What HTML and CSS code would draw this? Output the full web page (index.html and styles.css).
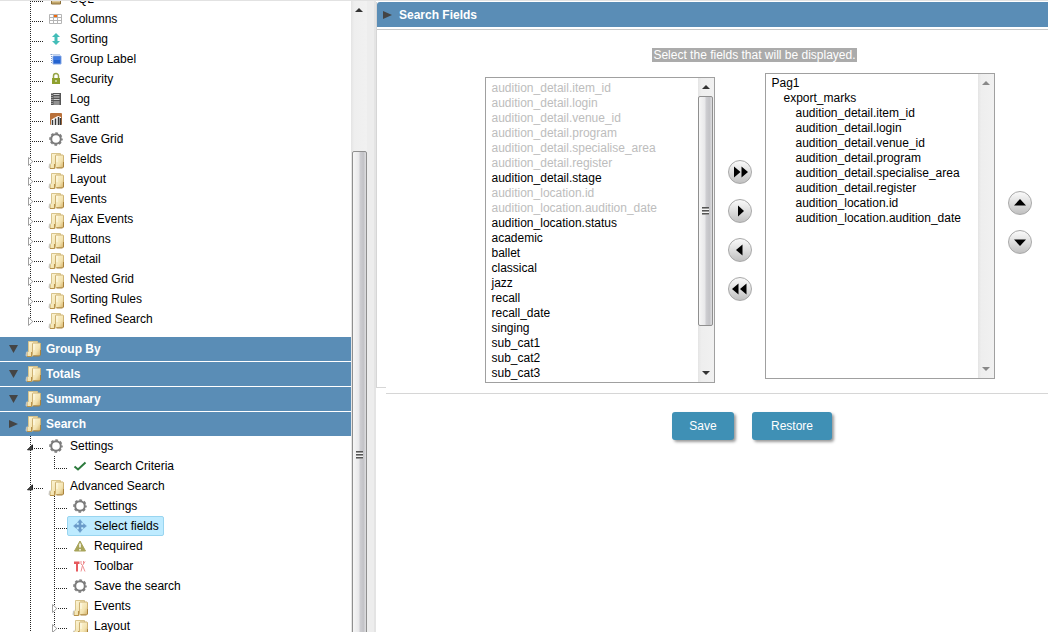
FILE: index.html
```html
<!DOCTYPE html>
<html lang="en">
<head>
<meta charset="utf-8">
<title>Search Fields</title>
<link rel="stylesheet" href="styles.css">
</head>
<body>
<svg class="defs" aria-hidden="true">
  <defs>
    <linearGradient id="gold" x1="0" y1="0" x2="1" y2="1">
      <stop offset="0" stop-color="#fdf6d8"/><stop offset=".6" stop-color="#f3e3b0"/><stop offset="1" stop-color="#d2b068"/>
    </linearGradient>
    <symbol id="folder" viewBox="0 0 16 20">
      <path d="M1 14.500l1.500-2v6H1.500l-1-1z" fill="#c9c6bd"/>
      <path d="M3.500 3.500h9v11l-6 4H2.500v-4l1-1z" fill="url(#gold)" stroke="#d8c48c"/>
      <path d="M2 18.500h4.500v-4.500" fill="none" stroke="#b8924a"/>
      <path d="M7.500 5.500l.500-.500h7l.500.500v11l-1 1H8.500l-1-1z" fill="url(#gold)" stroke="#ceb273"/>
      <path d="M8.500 18h6l1-1v-5" stroke="#a9823c" fill="none"/>
      <path d="M9 6v6" stroke="#fffbe8"/>
    </symbol>
    <symbol id="gear" viewBox="0 0 16 20">
      <circle cx="8" cy="10" r="4.800" fill="none" stroke="#7b7b7b" stroke-width="2"/>
      <circle cx="8" cy="10" r="6" fill="none" stroke="#7b7b7b" stroke-width="1.500" stroke-dasharray="2.700 2.012" stroke-dashoffset="1.350"/>
    </symbol>
    <symbol id="closed" viewBox="0 0 6 9"><path d="M.5.500v8L4.800 4.500z" fill="#fff" stroke="#a0a0a0"/></symbol>
    <symbol id="opened" viewBox="0 0 6 9"><path d="M5.500.800v5H.5z" fill="#444" stroke="#222"/></symbol>
    <symbol id="arrow-up" viewBox="0 0 8 4"><path d="M0 4L4 0l4 4z" fill="currentColor"/></symbol>
    <symbol id="arrow-down" viewBox="0 0 8 4"><path d="M0 0h8L4 4z" fill="currentColor"/></symbol>
  </defs>
</svg>

<div class="app">
  <nav class="sidebar" aria-label="Application">
    <div class="sidebar-content">
      <ul class="tree tree-main">
        <li><a href="#"><svg class="icon" viewBox="0 0 16 20"><path d="M3.500 7h9v8h-9z" fill="#c3a76d" stroke="#8d713b"/><path d="M4 12h8" stroke="#f5e9c6"/></svg>SQL</a></li>
        <li><a href="#"><svg class="icon" viewBox="0 0 16 20"><path d="M1.500 5.500h12v9h-12zM5.500 5.500v9M9.500 5.500v9M1.500 8.500h12M1.500 11.500h12" fill="#fff" stroke="#b5b5b5"/><path d="M6 6h3v2H6z" fill="#f26a0a"/></svg>Columns</a></li>
        <li><a href="#"><svg class="icon" viewBox="0 0 16 20"><path d="M8 4l4 4H9.500v4H12l-4 4-4-4h2.500V8H4z" fill="#43bdb8"/></svg>Sorting</a></li>
        <li><a href="#"><svg class="icon" viewBox="0 0 16 20"><path d="M2.500 5.500h10M3.500 5v10" stroke="#7d9ccc" stroke-dasharray="1 1"/><path d="M5 7h8v8H5z" fill="#2463cf" stroke="#85a9e8"/><path d="M6 8h6v3H6z" fill="#3f7be2"/></svg>Group Label</a></li>
        <li><a href="#"><svg class="icon" viewBox="0 0 16 20"><path d="M5.500 10V7a2.500 2.500 0 0 1 5 0v3" fill="none" stroke="#97a548" stroke-width="1.500"/><path d="M4 9h8v6H4z" fill="#8ea02f"/><path d="M7.500 11h1v2h-1z" fill="#fff"/></svg>Security</a></li>
        <li><a href="#"><svg class="icon" viewBox="0 0 16 20"><path d="M3 4h10v12H3z" fill="#555"/><path d="M5.500 5.500h6M5.500 8h6M5.500 10.500h6M5.500 13h6M5.500 15h6" stroke="#d0d0d0"/><path d="M4 4v12" stroke="#ddd" stroke-dasharray="1 1"/></svg>Log</a></li>
        <li><a href="#"><svg class="icon" viewBox="0 0 16 20"><rect x="2" y="4" width="12" height="12" rx="1" fill="#b9713a"/><path d="M3 16v-5l3-2 4-2 3 1v8z" fill="#fff"/><path d="M4.500 16v-5M7.500 16V9.500M10.500 16V8M12.500 16V9" stroke="#383838" stroke-width="1.500"/></svg>Gantt</a></li>
        <li><a href="#"><svg class="icon"><use href="#gear"/></svg>Save Grid</a></li>
        <li><svg class="twisty"><use href="#closed"/></svg><a href="#"><svg class="icon folder"><use href="#folder"/></svg>Fields</a></li>
        <li><svg class="twisty"><use href="#closed"/></svg><a href="#"><svg class="icon folder"><use href="#folder"/></svg>Layout</a></li>
        <li><svg class="twisty"><use href="#closed"/></svg><a href="#"><svg class="icon folder"><use href="#folder"/></svg>Events</a></li>
        <li><svg class="twisty"><use href="#closed"/></svg><a href="#"><svg class="icon folder"><use href="#folder"/></svg>Ajax Events</a></li>
        <li><svg class="twisty"><use href="#closed"/></svg><a href="#"><svg class="icon folder"><use href="#folder"/></svg>Buttons</a></li>
        <li><svg class="twisty"><use href="#closed"/></svg><a href="#"><svg class="icon folder"><use href="#folder"/></svg>Detail</a></li>
        <li><svg class="twisty"><use href="#closed"/></svg><a href="#"><svg class="icon folder"><use href="#folder"/></svg>Nested Grid</a></li>
        <li><svg class="twisty"><use href="#closed"/></svg><a href="#"><svg class="icon folder"><use href="#folder"/></svg>Sorting Rules</a></li>
        <li class="last"><svg class="twisty"><use href="#closed"/></svg><a href="#"><svg class="icon folder"><use href="#folder"/></svg>Refined Search</a></li>
      </ul>

      <div class="sections">
        <a class="section" href="#"><svg class="marker" viewBox="0 0 10 10"><path d="M0 1h9L4.500 9z"/></svg><svg class="icon"><use href="#folder"/></svg>Group By</a>
        <a class="section" href="#"><svg class="marker" viewBox="0 0 10 10"><path d="M0 1h9L4.500 9z"/></svg><svg class="icon"><use href="#folder"/></svg>Totals</a>
        <a class="section" href="#"><svg class="marker" viewBox="0 0 10 10"><path d="M0 1h9L4.500 9z"/></svg><svg class="icon"><use href="#folder"/></svg>Summary</a>
        <a class="section" href="#"><svg class="marker" viewBox="0 0 10 10"><path d="M0 1v8l9-4z"/></svg><svg class="icon"><use href="#folder"/></svg>Search</a>
      </div>

      <ul class="tree">
        <li><svg class="twisty open"><use href="#opened"/></svg><a href="#"><svg class="icon"><use href="#gear"/></svg>Settings</a>
          <ul>
            <li class="last"><a href="#"><svg class="icon" viewBox="0 0 16 20"><path d="M2.500 10.500l3.500 3 7.500-7" fill="none" stroke="#2c7a3c" stroke-width="2"/></svg>Search Criteria</a></li>
          </ul>
        </li>
        <li><svg class="twisty open"><use href="#opened"/></svg><a href="#"><svg class="icon folder"><use href="#folder"/></svg>Advanced Search</a>
          <ul>
            <li><a href="#"><svg class="icon"><use href="#gear"/></svg>Settings</a></li>
            <li><a class="selected" href="#"><svg class="icon" viewBox="0 0 16 20"><path d="M8 3.500l2.500 3H9v2.500h2.500V7.500l3 2.500-3 2.500V11H9v2.500h1.500l-2.500 3-2.500-3H7V11H4.500v1.500l-3-2.500 3-2.500V9H7V6.500H5.500z" fill="#6b9bc9" stroke="#6b9bc9" stroke-width=".5"/></svg>Select fields</a></li>
            <li><a href="#"><svg class="icon" viewBox="0 0 16 20"><path d="M8 5l5.500 10h-11z" fill="#a8a45a" stroke="#a8a45a" stroke-linejoin="round"/><path d="M8 7.500v4M8 13v1.500" stroke="#fff" stroke-width="1.500"/></svg>Required</a></li>
            <li><a href="#"><svg class="icon" viewBox="0 0 16 20"><path d="M2 5.500h5.500v2.500H2zM4 7.500h2v8H4z" fill="#e65a5e"/><path d="M9 5v3l1.500 1.500L13 5.500M10.500 9.500l2.500 6M10.500 9.500L9 15.500M11.500 5v3" fill="none" stroke="#ef8f92"/></svg>Toolbar</a></li>
            <li><a href="#"><svg class="icon"><use href="#gear"/></svg>Save the search</a></li>
            <li><svg class="twisty"><use href="#closed"/></svg><a href="#"><svg class="icon folder"><use href="#folder"/></svg>Events</a></li>
            <li><svg class="twisty"><use href="#closed"/></svg><a href="#"><svg class="icon folder"><use href="#folder"/></svg>Layout</a></li>
          </ul>
        </li>
      </ul>
    </div>
    <div class="scrollbar scrollbar-page" aria-hidden="true">
      <svg class="arrow"><use href="#arrow-up"/></svg>
      <div class="thumb"><span class="grip"></span></div>
    </div>
  </nav>
  <div class="splitter"></div>

  <main class="main">
    <section class="panel">
      <h1 class="panel-title"><svg class="marker" viewBox="0 0 10 10"><path d="M0 1v8l9-4z"/></svg>Search Fields</h1>
      <div class="panel-body">
        <p class="hint"><span>Select the fields that will be displayed.</span></p>
        <div class="picker">
          <div class="list list-source">
            <select multiple aria-label="Available fields">
              <option disabled>audition_detail.item_id</option>
              <option disabled>audition_detail.login</option>
              <option disabled>audition_detail.venue_id</option>
              <option disabled>audition_detail.program</option>
              <option disabled>audition_detail.specialise_area</option>
              <option disabled>audition_detail.register</option>
              <option>audition_detail.stage</option>
              <option disabled>audition_location.id</option>
              <option disabled>audition_location.audition_date</option>
              <option>audition_location.status</option>
              <option>academic</option>
              <option>ballet</option>
              <option>classical</option>
              <option>jazz</option>
              <option>recall</option>
              <option>recall_date</option>
              <option>singing</option>
              <option>sub_cat1</option>
              <option>sub_cat2</option>
              <option>sub_cat3</option>
            </select>
            <div class="scrollbar" aria-hidden="true">
              <svg class="arrow"><use href="#arrow-up"/></svg>
              <div class="thumb"><span class="grip"></span></div>
              <svg class="arrow"><use href="#arrow-down"/></svg>
            </div>
          </div>
          <div class="moves">
            <button type="button" aria-label="Add all"><svg viewBox="0 0 24 24"><path d="M6 6.500v11l6.500-5.500zM13.500 6.500v11L20 12z"/></svg></button>
            <button type="button" aria-label="Add"><svg viewBox="0 0 24 24"><path d="M10 6.500v11l6-5.500z"/></svg></button>
            <button type="button" aria-label="Remove"><svg viewBox="0 0 24 24"><path d="M14.500 6.500v11L8 12z"/></svg></button>
            <button type="button" aria-label="Remove all"><svg viewBox="0 0 24 24"><path d="M10.500 6.500v11L4 12zM18.500 6.500v11L12 12z"/></svg></button>
          </div>
          <div class="list">
            <select multiple aria-label="Selected fields">
              <option>Pag1</option>
              <option class="depth-1">export_marks</option>
              <option class="depth-2">audition_detail.item_id</option>
              <option class="depth-2">audition_detail.login</option>
              <option class="depth-2">audition_detail.venue_id</option>
              <option class="depth-2">audition_detail.program</option>
              <option class="depth-2">audition_detail.specialise_area</option>
              <option class="depth-2">audition_detail.register</option>
              <option class="depth-2">audition_location.id</option>
              <option class="depth-2">audition_location.audition_date</option>
            </select>
            <div class="scrollbar idle" aria-hidden="true">
              <svg class="arrow"><use href="#arrow-up"/></svg>
              <svg class="arrow"><use href="#arrow-down"/></svg>
            </div>
          </div>
          <div class="moves moves-order">
            <button type="button" aria-label="Move up"><svg viewBox="0 0 24 24"><path d="M6 14.500h12L12 8z"/></svg></button>
            <button type="button" aria-label="Move down"><svg viewBox="0 0 24 24"><path d="M6 9.500h12L12 16z"/></svg></button>
          </div>
        </div>
      </div>
    </section>
    <div class="actions">
      <button type="button">Save</button>
      <button type="button" class="wide">Restore</button>
    </div>
  </main>
</div>
</body>
</html>
```

FILE: styles.css
```css
* { box-sizing: border-box; }

body {
  margin: 0;
  background: #fff;
  color: #000;
  font: 12px/15px "Liberation Sans", Arial, sans-serif;
}

a { color: inherit; text-decoration: none; }
ul { margin: 0; padding: 0; list-style: none; }
svg { flex: none; display: block; }
button, select { font: inherit; color: inherit; }
.defs { position: absolute; width: 0; height: 0; }

.app {
  display: flex;
  height: 100vh;
  overflow: hidden;
  border-top: 1px solid #e2e2e2;
}

/* Sidebar */
.sidebar { display: flex; flex: 0 0 367px; min-height: 0; }
.sidebar-content { flex: 1; overflow: hidden; }
.tree { padding-left: 30px; }
.tree-main { margin-top: -12px; padding-bottom: 8px; }

.tree li {
  position: relative;
  padding-left: 13px;
  background: repeating-linear-gradient(#222 0 1px, transparent 1px 2px) 0 0 / 1px 100% no-repeat;
}
.tree li.last { background-size: 1px 13px; }
.tree li::before {
  content: "";
  position: absolute;
  left: 2px;
  top: 12px;
  width: 12px;
  height: 1px;
  background: repeating-linear-gradient(90deg, #222 0 1px, transparent 1px 2px);
}
.tree li > ul { margin-left: 11px; }
.tree a {
  display: inline-flex;
  align-items: center;
  gap: 6px;
  height: 20px;
  padding: 0 4px;
  border: 1px solid transparent;
  border-radius: 2px;
  vertical-align: top;
  white-space: nowrap;
}
.tree a.selected { background: #beebff; border-color: #99d5f0; }
.icon { width: 16px; height: 20px; }
.tree .folder { padding-top: 1px; height: 21px; }
.twisty { position: absolute; left: -2px; top: 8px; width: 6px; height: 9px; }
.twisty.open { left: -3px; }

.sections { display: flex; flex-direction: column; gap: 1px; }
.section, .panel-title {
  display: flex;
  align-items: center;
  background: #5a8db6;
  color: #fff;
  font-size: 12px;
  font-weight: bold;
}
.section { height: 24px; padding: 0 9px; }
.section .icon { margin: 0 5px 2px 6px; }
.marker { width: 10px; height: 10px; fill: #444; }

/* Scrollbars */
.scrollbar {
  display: flex;
  flex-direction: column;
  align-items: center;
  flex: 0 0 16px;
  background: linear-gradient(90deg, #e4e4e4, #eee 20%, #f1f1f1);
  color: #333;
}
.scrollbar .arrow { width: 8px; height: 4px; margin: 7px 0; }
.scrollbar .thumb {
  display: flex;
  align-items: center;
  justify-content: center;
  width: 15px;
  border: 1px solid #8f8f8f;
  border-radius: 2px;
  background: linear-gradient(90deg, #f6f6f6, #e8e8ea 45%, #cdcdd1 55%, #c3c3c7 80%, #dedee0);
}
.grip {
  width: 7px;
  height: 8px;
  background: repeating-linear-gradient(#555 0 1px, #999 1px 2px, #f4f4f4 2px 3px);
}
.scrollbar-page .thumb { flex: 0 0 608px; margin-top: 132px; }
.list .scrollbar .thumb { flex: 0 0 230px; }
.scrollbar .arrow:last-child { margin-top: auto; }
.idle { color: #888; }

.splitter { flex: 0 0 9px; background: #ededed; border-right: 2px solid #e4e4e4; }

/* Main */
.main { flex: 1; min-width: 0; padding-top: 1px; }
.panel { position: relative; border-left: 1px solid #d6d6d6; }
.panel::after {
  content: "";
  position: absolute;
  left: -1px;
  bottom: 0;
  width: 10px;
  height: 1px;
  background: #d6d6d6;
}
.panel-title {
  gap: 6px;
  height: 25px;
  margin: 0;
  padding: 1px 0 0 6px;
  border-top-left-radius: 3px;
}
.panel-body { margin-top: 2px; padding: 18px 0 5px; border-top: 1px solid #c8c8c8; }
.hint { margin: 0 0 11px; padding-left: 84px; text-align: center; color: #fff; line-height: 14px; }
.hint span { display: inline-block; padding: 0 1px; background: #ababab; }

.picker {
  display: flex;
  justify-content: center;
  align-items: flex-start;
  gap: 13px;
  padding-left: 91px;
}
.list { display: flex; flex: 0 0 230px; height: 306px; border: 1px solid #a0a0a0; background: #fff; }
.list-source { margin-top: 4px; }
.list select {
  flex: 1;
  min-width: 0;
  height: 100%;
  margin: 0;
  padding: 2px 0;
  border: 0;
  border-radius: 0;
  outline: 0;
  background: none;
  overflow: hidden;
  scrollbar-width: none;
}
.list-source select { padding: 3px 0 1px; }
.list option { min-height: 15px; padding: 0 0 0 6px; line-height: 15px; }
.list option:disabled { color: #bdbdbd; }
.list option.depth-1 { padding-left: 18px; }
.list option.depth-2 { padding-left: 30px; }

.moves { display: flex; flex-direction: column; gap: 15px; margin-top: 87px; }
.moves-order { margin-top: 118px; }
.moves button {
  width: 24px;
  height: 24px;
  padding: 0;
  border: 1px solid #a8a8a8;
  border-radius: 50%;
  background: linear-gradient(#fafafa, #dcdcdc 55%, #c0c0c0);
}
.moves svg { width: 24px; height: 24px; margin: -1px; }

.actions {
  display: flex;
  justify-content: center;
  gap: 18px;
  margin: 5px 0 0 10px;
  padding: 18px 0 0 70px;
  border-top: 1px solid #d6d6d6;
}
.actions button {
  height: 28px;
  padding: 0 16px;
  border: 0;
  border-radius: 3px;
  background: #3f90b5;
  color: #fff;
  box-shadow: 2px 2px 3px rgba(0, 0, 0, .4);
}
.actions button { min-width: 62px; }
.actions .wide { min-width: 80px; }
```
